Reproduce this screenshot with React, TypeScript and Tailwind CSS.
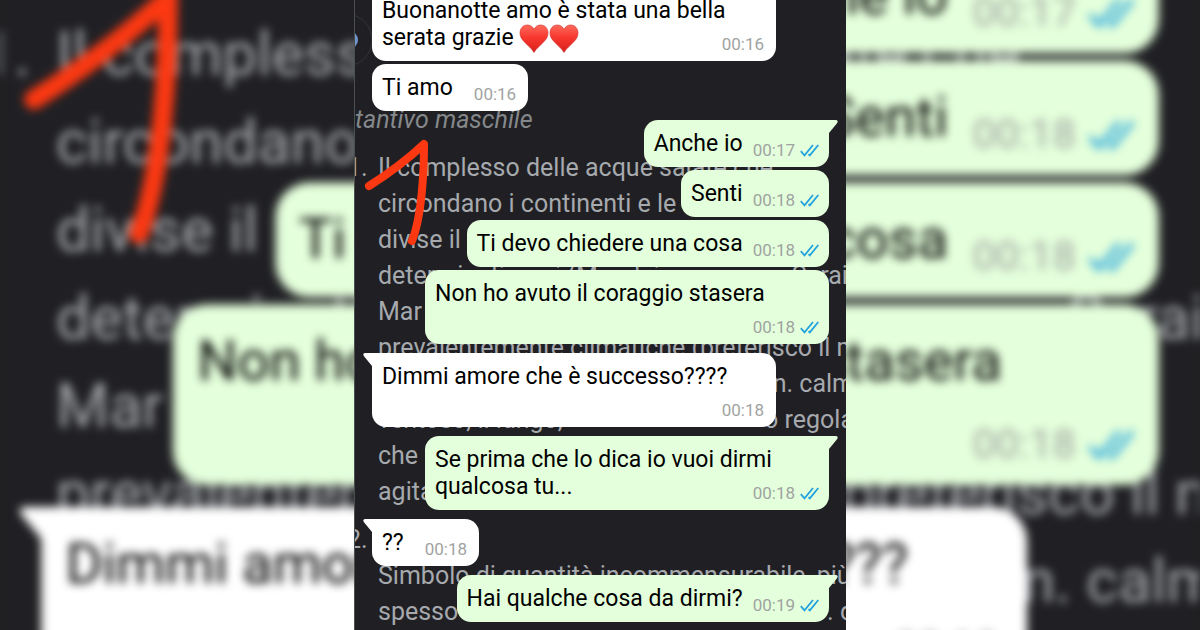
import { useId, type ReactNode } from "react";

type Message = {
  id: number;
  sent: boolean;
  time: string;
  text: ReactNode;
  tail?: boolean;
  newGroup?: boolean;
};

function Heart() {
  const id = useId();

  return (
    <svg viewBox="0 0 30 30" className="inline-block h-[30px] w-[30px] -my-2" role="img" aria-label="cuore rosso">
      <defs>
        <linearGradient id={id} x1="0" y1="0" x2="0" y2="1">
          <stop offset="0" stopColor="#ff6a5c" />
          <stop offset="0.45" stopColor="#f8382f" />
          <stop offset="1" stopColor="#d81f1c" />
        </linearGradient>
      </defs>
      <path
        d="M15 28.5C12.6 24.4 8.8 21.6 5.2 17.8C2.6 15 1 12.4 1 8.9C1 4.3 4.2 1 8.3 1C11.4 1 13.8 2.6 15 5.4C16.2 2.6 18.6 1 21.7 1C25.8 1 29 4.3 29 8.9C29 12.4 27.4 15 24.8 17.8C21.2 21.6 17.4 24.4 15 28.5Z"
        fill={`url(#${id})`}
        stroke="#c92a22"
        strokeWidth="0.6"
      />
    </svg>
  );
}

function ReadTicks() {
  return (
    <svg viewBox="0 0 19 13" className="h-[13px] w-[19px]" fill="none" stroke="#22a3de" strokeWidth="1.8" role="img" aria-label="letto">
      <path d="M0.8 7.2L4.5 11.4L13 1" />
      <path d="M8.5 10.2L9.8 11.4L18.3 1" />
    </svg>
  );
}

const messages: Message[] = [
  {
    id: 1,
    sent: false,
    time: "00:16",
    text: (
      <>
        Buonanotte amo è stata una bella serata grazie <Heart />
        <Heart />
      </>
    ),
  },
  { id: 2, sent: false, time: "00:16", text: "Ti amo" },
  { id: 3, sent: true, time: "00:17", text: "Anche io", tail: true, newGroup: true },
  { id: 4, sent: true, time: "00:18", text: "Senti" },
  { id: 5, sent: true, time: "00:18", text: "Ti devo chiedere una cosa" },
  { id: 6, sent: true, time: "00:18", text: "Non ho avuto il coraggio stasera" },
  { id: 7, sent: false, time: "00:18", text: "Dimmi amore che è successo????", tail: true, newGroup: true },
  { id: 8, sent: true, time: "00:18", text: "Se prima che lo dica io vuoi dirmi qualcosa tu...", tail: true, newGroup: true },
  { id: 9, sent: false, time: "00:18", text: "??", tail: true, newGroup: true },
  { id: 10, sent: true, time: "00:19", text: "Hai qualche cosa da dirmi?", tail: true, newGroup: true },
];

// left part of the line, then what shows up again on the right
const definition: [string, string][] = [
  ["Il complesso delle acque salate che", ""],
  ["circondano i continenti e le", ""],
  ["divise il", ""],
  ["determinati mari (Mar dei", "Sarail"],
  ["Mar", ""],
  ["prevalentemente climatiche (preferisco il m", ""],
  ["", "n. calm"],
  ["ventoso, il lungo, ", "o regola"],
  ["che", ""],
  ["agitato", ""],
];

function Bubble({ message }: { message: Message }) {
  const { sent, tail, newGroup } = message;

  return (
    <li
      className={`relative flow-root max-w-[404px] rounded-[14px] pt-[10px] pb-[7px] pl-[10px] text-[23px] leading-[27px] text-black ${
        sent ? "self-end bg-[#e4ffdb] pr-[10px]" : "self-start bg-white pr-3"
      } ${newGroup ? "mt-[9px]" : "mt-[3px]"} ${tail ? (sent ? "rounded-tr-none" : "rounded-tl-none") : ""}`}
    >
      {tail && sent && (
        <svg viewBox="0 0 10 14" className="absolute top-0 -right-[9px] h-[14px] w-[10px]" fill="#e4ffdb">
          <path d="M0 0H8C9.8 0 10.2 2 9 3.2L1 13V14H0Z" />
        </svg>
      )}
      {tail && !sent && (
        <svg viewBox="0 0 10 14" className="absolute top-0 -left-[9px] h-[14px] w-[10px]" fill="#ffffff">
          <path d="M10 0H2C0.2 0 -0.2 2 1 3.2L9 13V14H10Z" />
        </svg>
      )}
      {message.text}
      <span
        className={`float-right flex h-[30px] items-end gap-[5px] text-[17px] leading-[20px] text-[#9fa3a1] ${
          sent ? "ml-[10px]" : "ml-[21px]"
        }`}
      >
        <time>{message.time}</time>
        {sent && (
          <span className="pb-[3px]">
            <ReadTicks />
          </span>
        )}
      </span>
    </li>
  );
}

function Wallpaper() {
  return (
    <div className="absolute inset-0 overflow-hidden pt-[102px] text-[25px] leading-[36px] whitespace-nowrap text-[#a6a9ad]">
      <p className="text-[#85888b] italic">tantivo maschile</p>
      <ol className="-mr-2 -ml-2 mt-3 flex flex-col gap-3">
        <li className="grid grid-cols-[31px_minmax(0,1fr)]">
          <span>1.</span>
          <div>
            {definition.map(([start, end], i) => (
              <p key={i} className="flex min-h-9 justify-between">
                <span>{start}</span>
                <span>{end}</span>
              </p>
            ))}
          </div>
        </li>
        <li className="grid grid-cols-[31px_minmax(0,1fr)]">
          <span>2.</span>
          <div>
            <p className="min-h-9"></p>
            <p>Simbolo di quantità incommensurabile, più</p>
            <p className="flex justify-between">
              <span>spesso</span>
              <span>. d</span>
            </p>
          </div>
        </li>
      </ol>
      <svg viewBox="0 0 90 260" className="absolute top-0 left-0 h-[260px] w-[90px]" fill="none">
        <circle cx="-9" cy="40" r="26" stroke="#34363a" />
        <circle cx="-6" cy="40" r="9" fill="#6f95cf" />
        <path
          d="M14 186C33 174 52 160 69 144C69 170 67 216 57 241"
          stroke="#fb3812"
          strokeWidth="8"
          strokeLinecap="round"
          strokeLinejoin="round"
        />
      </svg>
    </div>
  );
}

function Chat({ bordered = false }: { bordered?: boolean }) {
  return (
    <section
      className={`relative flex h-full w-[41%] flex-col justify-end overflow-hidden bg-[#202024] ${
        bordered ? "border-l border-[#4a504d]" : ""
      }`}
    >
      <Wallpaper />
      <ul className="relative flex flex-col px-[17px] pb-2">
        {messages.map((message) => (
          <Bubble key={message.id} message={message} />
        ))}
      </ul>
    </section>
  );
}

export default function App() {
  return (
    <main className="relative h-screen overflow-hidden bg-[#202024] font-['Roboto',sans-serif]">
      {/* enlarged, blurred copy behind the chat */}
      <div className="absolute inset-0 blur-[5px]" aria-hidden="true">
        <div className="flex h-full origin-[50%_246px] scale-[2.44] justify-center">
          <Chat />
        </div>
      </div>
      <div className="relative flex h-full justify-center">
        <Chat bordered />
      </div>
    </main>
  );
}
